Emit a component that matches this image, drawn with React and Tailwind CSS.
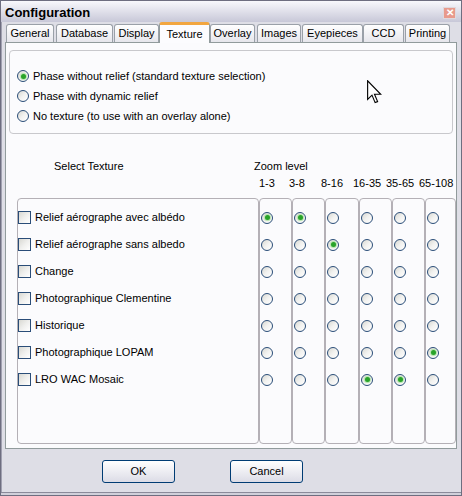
import React, { useState } from 'react';

const tabs = [
  { label: 'General', cls: 'ml-[1px] w-[48px]' },
  { label: 'Database', cls: 'ml-[2px] w-[57px]' },
  { label: 'Display', cls: 'ml-[1px] w-[45px]' },
  { label: 'Texture', cls: 'w-[51px]', active: true },
  { label: 'Overlay', cls: 'w-[45px]' },
  { label: 'Images', cls: 'ml-[2px] w-[44px]' },
  { label: 'Eyepieces', cls: 'ml-[1px] w-[61px]' },
  { label: 'CCD', cls: 'w-[41px]' },
  { label: 'Printing', cls: 'ml-[1px] w-[45px]' },
];

const textures = [
  'Relief aérographe avec albédo',
  'Relief aérographe sans albedo',
  'Change',
  'Photographique Clementine',
  'Historique',
  'Photographique LOPAM',
  'LRO WAC Mosaic',
];

const zooms = [
  { label: '1-3', cls: 'w-[30px]' },
  { label: '3-8', cls: 'w-[32px]' },
  { label: '8-16', cls: 'w-[32px]' },
  { label: '16-35', cls: 'w-[33px]' },
  { label: '35-65', cls: 'w-[33px]' },
  { label: '65-108', cls: 'w-[36px]' },
];

const colWidths = ['w-[33px]', 'w-[33px]', 'w-[34px]', 'w-[33px]', 'w-[33px]', 'w-[31px]'];

const Radio = ({ checked, onClick }) => (
  <span
    onClick={onClick}
    className="w-[12px] h-[12px] shrink-0 rounded-full border border-[#2a4d78] bg-gradient-to-br from-[#d8d8d2] via-[#f2f2f0] to-white flex items-center justify-center"
  >
    {checked && <span className="w-[5px] h-[5px] rounded-full bg-[#29a329] shadow-[0_0_1px_1px_#b0e4a8]" />}
  </span>
);

const Checkbox = () => (
  <span className="w-[13px] h-[13px] shrink-0 border border-[#2a4d78] bg-gradient-to-br from-[#d8d8d2] via-[#efefed] to-white" />
);

const Cursor = () => (
  <svg width="15" height="24" viewBox="0 0 12 19" className="absolute left-[361px] top-[37px]">
    <path d="M0.5 0.5 L0.5 15.5 L4 12 L6.5 18 L8.5 17.2 L6 11.3 L11 11.3 Z" fill="white" stroke="black" strokeWidth="0.9" />
  </svg>
);

export default function App() {
  const [mode, setMode] = useState(0);
  const [sel, setSel] = useState([0, 2, -1, -1, -1, 5, 3]);
  const [extra] = useState({ 0: [1], 6: [4] });

  const isOn = (row, col) => sel[row] === col || (extra[row] || []).includes(col);

  return (
    <div className="w-[462px] h-[496px] bg-[#dedee6] border border-[#6e6e80] flex flex-col font-['Liberation_Sans',Arial,sans-serif] text-[11px] text-black">
      {/* title bar */}
      <div className="h-[21px] shrink-0 flex items-center justify-between pl-[4px] pr-[5px] bg-gradient-to-b from-[#f8f8fc] to-[#c8c8d8]">
        <span className="font-bold text-[13px] leading-none mt-[2px]">Configuration</span>
        <span className="w-[13px] h-[12px] mt-[3px] bg-[#e89a8c] border border-[#e0d8dc] flex items-center justify-center text-white font-bold text-[10px] leading-none">
          ✕
        </span>
      </div>

      <div className="flex-1 flex flex-col pl-[3px] pr-[4px] border-l-[1px] border-[#a0a0b0]">
        {/* tabs */}
        <div className="h-[20px] shrink-0 flex items-end">
          {tabs.map((t) =>
            t.active ? (
              <div
                key={t.label}
                className={`${t.cls} h-[21px] -mb-[1px] relative z-10 bg-[#fcfcfe] border border-b-0 border-[#919b9c] border-t-[3px] border-t-[#f2a640] rounded-t-[3px] flex items-center justify-center`}
              >
                {t.label}
              </div>
            ) : (
              <div
                key={t.label}
                className={`${t.cls} h-[18px] bg-gradient-to-b from-white to-[#e6e6ec] border border-b-0 border-[#9aa0a8] rounded-t-[3px] flex items-center justify-center`}
              >
                {t.label}
              </div>
            )
          )}
        </div>

        {/* panel */}
        <div className="h-[407px] shrink-0 bg-[#fbfbfd] border border-[#919b9c] relative flex flex-col">
          <div className="mx-[3px] mt-[7px] h-[84px] border border-[#c8c8cc] rounded-[4px] pl-[7px] pt-[15px] flex flex-col">
            {[
              'Phase without relief (standard texture selection)',
              'Phase with dynamic relief',
              'No texture (to use with an overlay alone)',
            ].map((label, i) => (
              <div key={label} className="h-[20px] flex items-center gap-[4px]" onClick={() => setMode(i)}>
                <Radio checked={mode === i} />
                <span className="leading-none">{label}</span>
              </div>
            ))}
          </div>

          <div className="pt-[25px] flex flex-col">
            <div className="h-[14px] leading-[14px] flex">
              <span className="ml-[48px] w-[200px]">Select Texture</span>
              <span>Zoom level</span>
            </div>
            <div className="mt-[3px] h-[14px] leading-[14px] flex pl-[253px]">
              {zooms.map((z) => (
                <span key={z.label} className={z.cls}>
                  {z.label}
                </span>
              ))}
            </div>
          </div>

          <div className="mt-[8px] ml-[11px] h-[246px] flex">
            <div className="w-[242px] border border-[#b4b0b6] rounded-[4px] pt-[5px] flex flex-col">
              {textures.map((t) => (
                <div key={t} className="h-[27px] flex items-center gap-[4px]">
                  <Checkbox />
                  <span className="leading-none">{t}</span>
                </div>
              ))}
            </div>
            {colWidths.map((w, col) => (
              <div key={col} className={`${w} border border-[#b4b0b6] rounded-[4px] pt-[5px] pl-[1px] flex flex-col`}>
                {textures.map((t, row) => (
                  <div key={t} className="h-[27px] flex items-center">
                    <Radio
                      checked={isOn(row, col)}
                      onClick={() => {
                        const next = [...sel];
                        next[row] = col;
                        setSel(next);
                      }}
                    />
                  </div>
                ))}
              </div>
            ))}
          </div>

          <Cursor />
        </div>

        {/* buttons */}
        <div className="flex-1 flex items-start pt-[11px] pl-[97px] gap-[55px]">
          <button className="w-[73px] h-[23px] border border-[#003c74] rounded-[3px] bg-gradient-to-b from-white to-[#dcdce6] text-[11px]">
            OK
          </button>
          <button className="w-[73px] h-[23px] border border-[#003c74] rounded-[3px] bg-gradient-to-b from-white to-[#dcdce6] text-[11px]">
            Cancel
          </button>
        </div>
      </div>
      <div className="h-[3px] shrink-0 border-t border-[#8a8a9a] bg-[#d0d0da]" />
    </div>
  );
}
